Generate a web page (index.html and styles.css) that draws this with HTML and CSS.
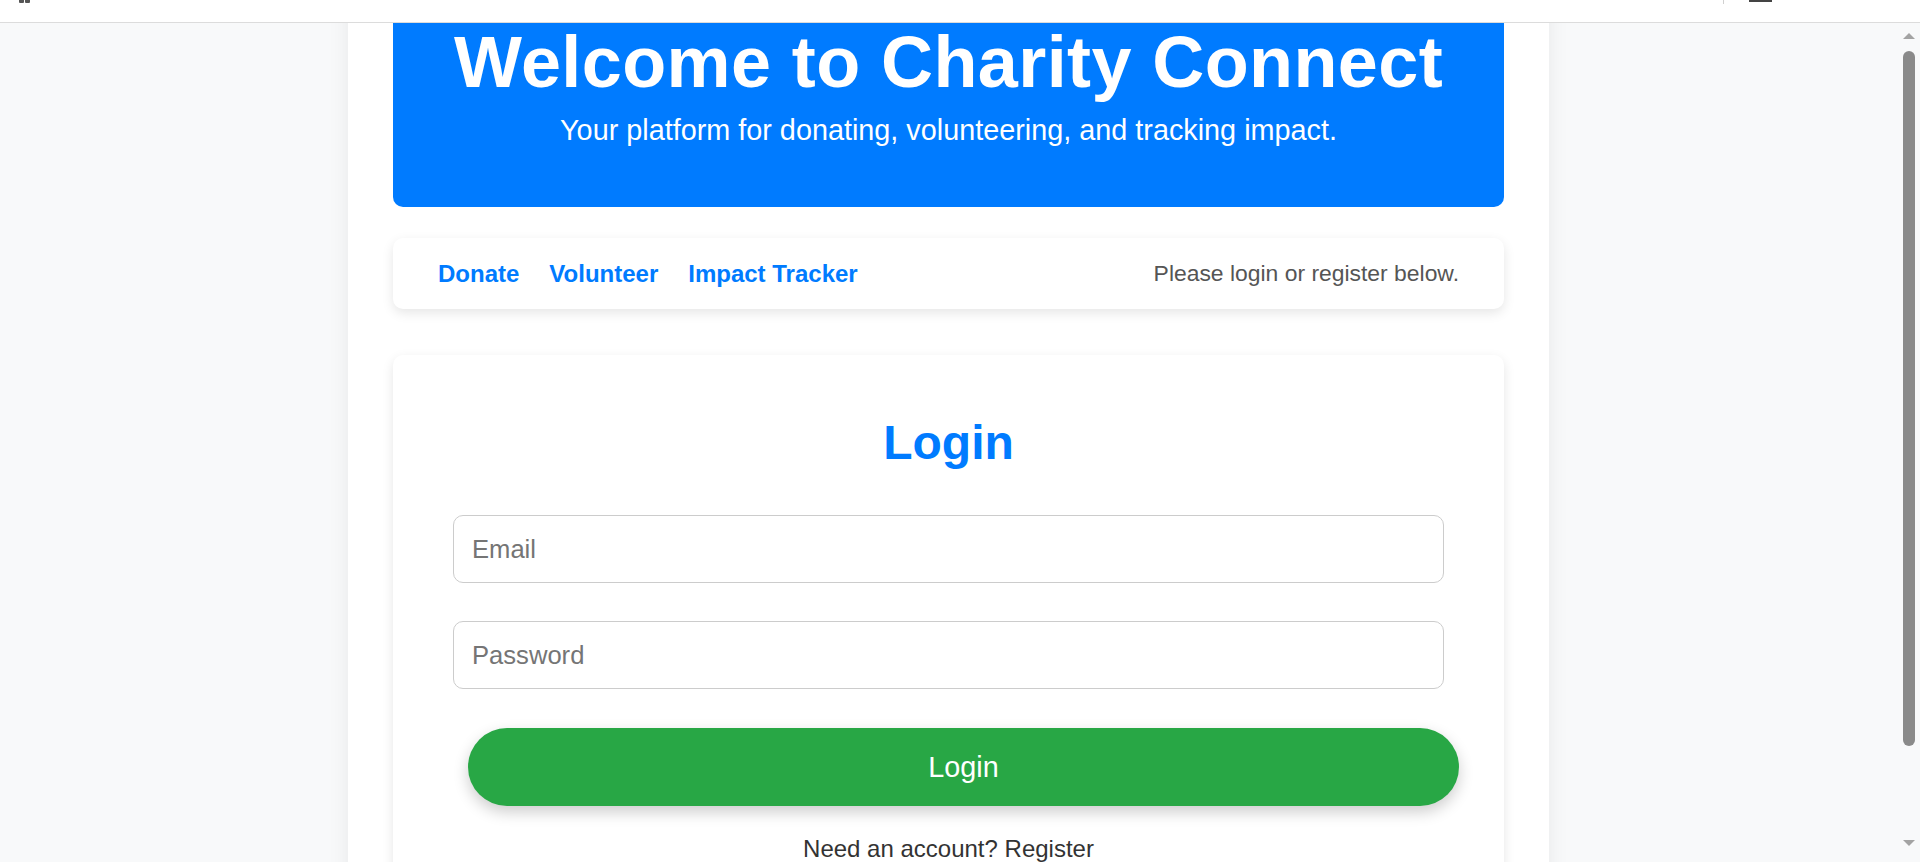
FILE: index.html
```html
<!DOCTYPE html>
<html lang="en">
<head>
<meta charset="utf-8">
<title>Charity Connect</title>
<link rel="stylesheet" href="styles.css">
</head>
<body>
<div class="topbar">
  <div class="tb-left"><span class="tb-sq"></span><span class="tb-sq"></span></div>
  <div class="tb-right"><span class="tb-sep"></span><span class="tb-icon"></span></div>
</div>
<div class="frame">
  <div class="viewport">
    <div class="container">
      <header class="hero">
        <h1>Welcome to Charity Connect</h1>
        <p>Your platform for donating, volunteering, and tracking impact.</p>
      </header>
      <nav class="nav">
        <div class="links">
          <a href="#">Donate</a>
          <a href="#">Volunteer</a>
          <a href="#">Impact Tracker</a>
        </div>
        <span class="status">Please login or register below.</span>
      </nav>
      <section class="card">
        <h2>Login</h2>
        <form class="form">
          <input type="email" placeholder="Email">
          <input type="password" placeholder="Password" class="pw">
          <button type="button">Login</button>
        </form>
        <p class="switch">Need an account? Register</p>
      </section>
    </div>
  </div>
  <div class="scrollbar">
    <span class="arrow up"></span>
    <div class="track"><div class="thumb"></div></div>
    <span class="arrow down"></span>
  </div>
</div>
</body>
</html>
```
FILE: styles.css
```css
html, body {
  margin: 0;
  padding: 0;
  height: 862px;
  overflow: hidden;
}
body {
  font-family: "Liberation Sans", Arial, sans-serif;
  background: #fff;
}
.topbar {
  height: 22px;
  border-bottom: 1px solid #dcdcdc;
  background: #fff;
  display: flex;
  justify-content: space-between;
  align-items: flex-start;
}
.tb-left {
  display: flex;
  gap: 1px;
  padding-left: 19px;
}
.tb-sq {
  width: 5px;
  height: 3px;
  background: #555;
  border-radius: 0 0 1px 1px;
}
.tb-right {
  display: flex;
  align-items: flex-start;
  padding-right: 148px;
}
.tb-sep {
  width: 1px;
  height: 4px;
  background: #d0d0d0;
  margin-right: 25px;
}
.tb-icon {
  width: 23px;
  height: 2px;
  background: #444;
}
.frame {
  display: flex;
  height: 839px;
}
.viewport {
  flex: 1;
  background: #f8f9fa;
  overflow: hidden;
}
.container {
  width: 1201px;
  box-sizing: border-box;
  margin: -42px auto 0;
  padding: 0 45px 40px;
  background: #fff;
  box-shadow: 0 0 20px rgba(0, 0, 0, 0.07);
  min-height: 1000px;
}
.hero {
  background: #007bff;
  color: #fff;
  text-align: center;
  padding: 40px 20px 60px;
  border-radius: 10px;
}
.hero h1 {
  margin: 0 0 11px;
  font-size: 72px;
  font-weight: bold;
  letter-spacing: 0.4px;
  line-height: normal;
}
.hero p {
  margin: 0;
  font-size: 28.8px;
}
.nav {
  margin-top: 31px;
  height: 71px;
  box-sizing: border-box;
  padding: 0 45px 0 45px;
  display: flex;
  align-items: center;
  justify-content: space-between;
  background: #fff;
  border-radius: 10px;
  box-shadow: 0 4px 12px rgba(0, 0, 0, 0.1);
}
.links {
  display: flex;
  gap: 30px;
}
.links a {
  color: #007bff;
  font-weight: bold;
  font-size: 24px;
  text-decoration: none;
}
.status {
  color: #555;
  font-size: 22.9px;
}
.card {
  margin-top: 46px;
  padding: 60px;
  background: #fff;
  border-radius: 10px;
  box-shadow: 0 4px 12px rgba(0, 0, 0, 0.1);
}
.card h2 {
  margin: 0 0 45px;
  text-align: center;
  color: #007bff;
  font-size: 48px;
  font-weight: bold;
}
.form input {
  display: block;
  width: 100%;
  height: 68px;
  box-sizing: border-box;
  padding: 0 18px;
  margin: 0 0 38px;
  font-family: inherit;
  font-size: 25.6px;
  border: 1px solid #ccc;
  border-radius: 10px;
  background: #fff;
  outline: none;
}
.form input.pw {
  margin-bottom: 39px;
}
.form input::placeholder {
  color: #757575;
}
.form button {
  display: block;
  width: 991px;
  height: 78px;
  margin-left: 15px;
  border: none;
  border-radius: 50px;
  background: #28a745;
  color: #fff;
  font-family: inherit;
  font-size: 28.8px;
  box-shadow: 0 6px 15px rgba(0, 0, 0, 0.2);
}
.switch {
  margin: 29px 0 0;
  text-align: center;
  font-size: 24px;
  color: #333;
}
.scrollbar {
  width: 23px;
  background: #f8f9fa;
  display: flex;
  flex-direction: column;
  align-items: center;
}
.arrow {
  width: 0;
  height: 0;
  border-left: 6px solid transparent;
  border-right: 6px solid transparent;
}
.arrow.up {
  margin-top: 10px;
  border-bottom: 6px solid #a3a3a3;
}
.arrow.down {
  margin-top: 94px;
  border-top: 6px solid #a3a3a3;
}
.track {
  margin-top: 12px;
  height: 695px;
  display: flex;
}
.thumb {
  width: 12px;
  height: 100%;
  border-radius: 6px;
  background: #8a8a8a;
}
```
